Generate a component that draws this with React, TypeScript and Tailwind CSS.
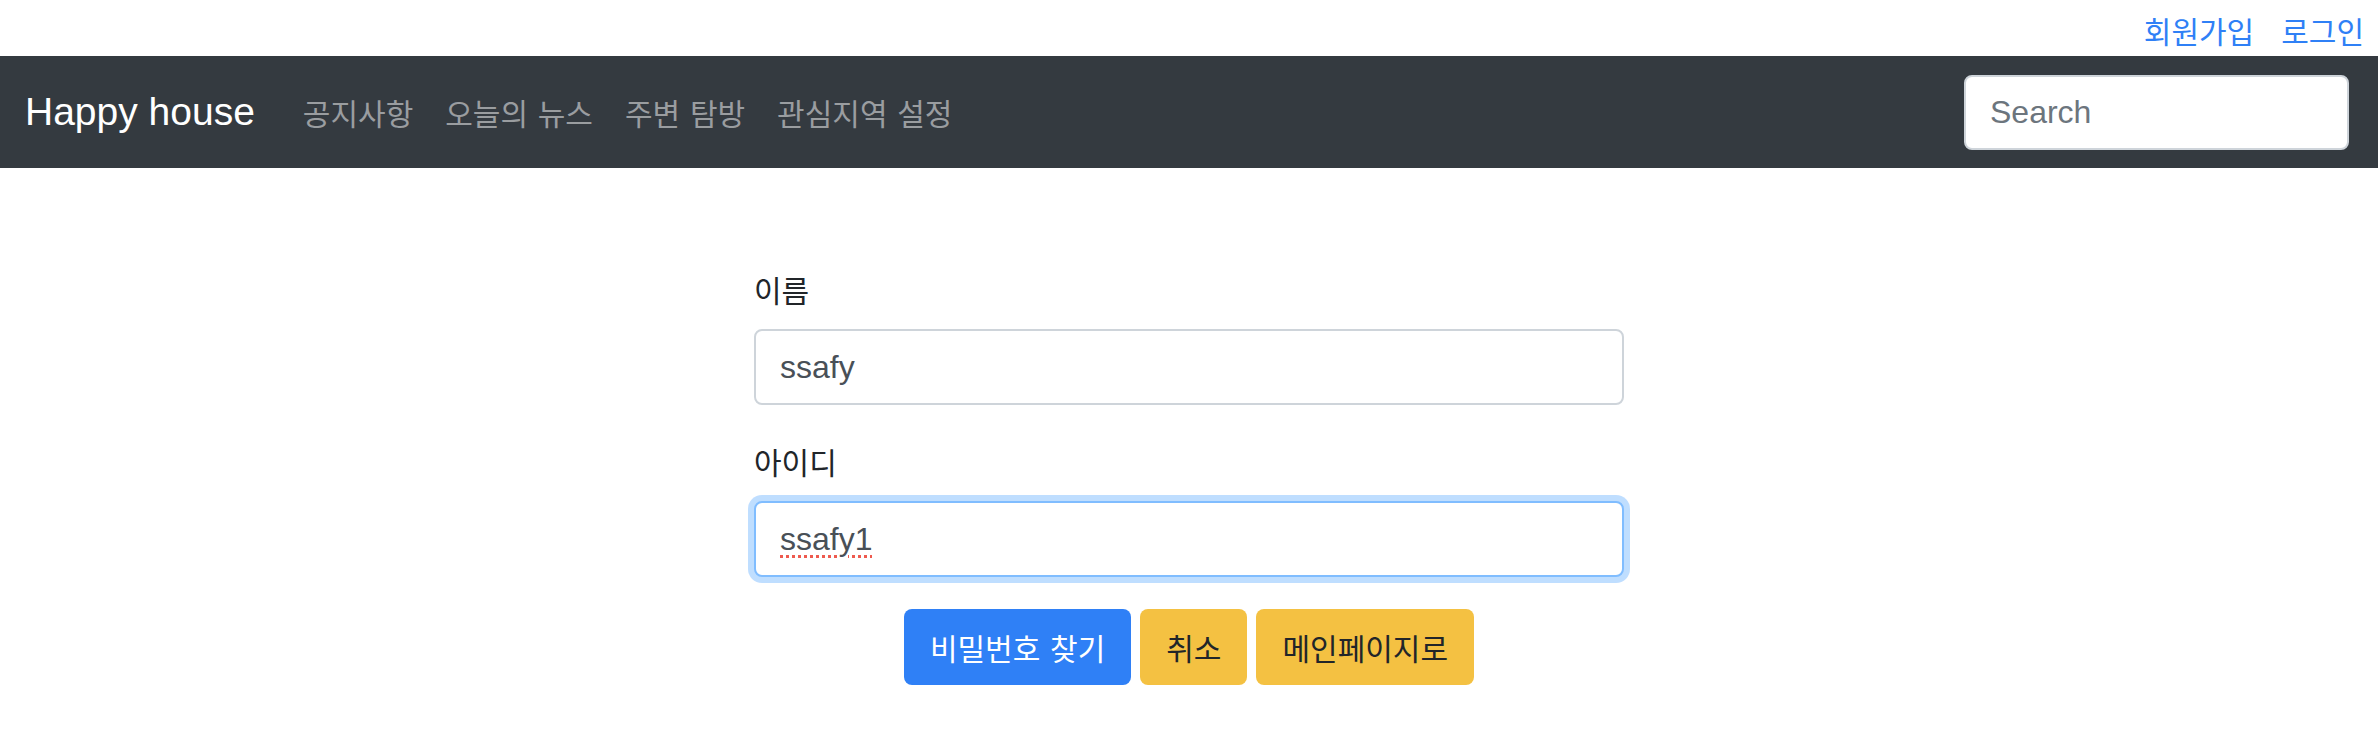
import React from "react";

const ko = "font-['Noto_Sans_CJK_KR','Liberation_Sans',sans-serif] text-[30px] tracking-[0px] [word-spacing:3px]";

export default function App() {
  return (
    <div className="min-h-[734px] bg-white font-['Liberation_Sans','Noto_Sans_CJK_KR',sans-serif]">
      <div className="flex h-[56px] items-center justify-end gap-[27px] pr-[14px] pt-[4px]">
        <a className={`${ko} text-[#2f80f6] leading-[48px]`}>회원가입</a>
        <a className={`${ko} text-[#2f80f6] leading-[48px]`}>로그인</a>
      </div>
      <nav className="flex h-[112px] items-center bg-[#343a40] pl-[25px] pr-[29px]">
        <span className="text-[39px] leading-[60px] text-white mr-[32px]">Happy house</span>
        <ul className="flex items-center">
          {["공지사항", "오늘의 뉴스", "주변 탐방", "관심지역 설정"].map((t) => (
            <li key={t} className={`${ko} px-[16px] leading-[48px] text-[#9a9da0]`}>{t}</li>
          ))}
        </ul>
        <div className="flex-1" />
        <input
          readOnly
          placeholder="Search"
          className="h-[75px] w-[385px] rounded-[8px] border-2 border-[#ced4da] bg-white px-[24px] text-[32px] text-[#495057] placeholder:text-[#6c757d] outline-none"
        />
      </nav>
      <div className="flex justify-center pt-[97px]">
        <div className="w-[870px]">
          <div className="mb-[32px]">
            <label className={`${ko} block leading-[48px] mb-[16px] text-[#212529]`}>이름</label>
            <input
              readOnly
              value="ssafy"
              className="block h-[76px] w-full rounded-[8px] border-2 border-[#ced4da] bg-white px-[24px] text-[32px] text-[#495057] outline-none"
            />
          </div>
          <div className="mb-[32px]">
            <label className={`${ko} block leading-[48px] mb-[16px] text-[#212529]`}>아이디</label>
            <input
              readOnly
              value="ssafy1"
              className="block h-[76px] w-full rounded-[8px] border-2 border-[#80bdff] bg-white px-[24px] text-[32px] text-[#495057] outline-none shadow-[0_0_0_6px_rgba(0,123,255,0.25)] underline decoration-dotted decoration-[#ee5a4f] decoration-[3px] underline-offset-[5px]"
            />
          </div>
          <div className="flex justify-center gap-[9px]">
            <button className={`${ko} flex h-[76px] items-center rounded-[8px] bg-[#2f80f6] px-[26px] text-white`}>비밀번호 찾기</button>
            <button className={`${ko} flex h-[76px] items-center rounded-[8px] bg-[#f4c142] px-[26px] text-[#212529]`}>취소</button>
            <button className={`${ko} flex h-[76px] items-center rounded-[8px] bg-[#f4c142] px-[26px] text-[#212529]`}>메인페이지로</button>
          </div>
        </div>
      </div>
    </div>
  );
}
